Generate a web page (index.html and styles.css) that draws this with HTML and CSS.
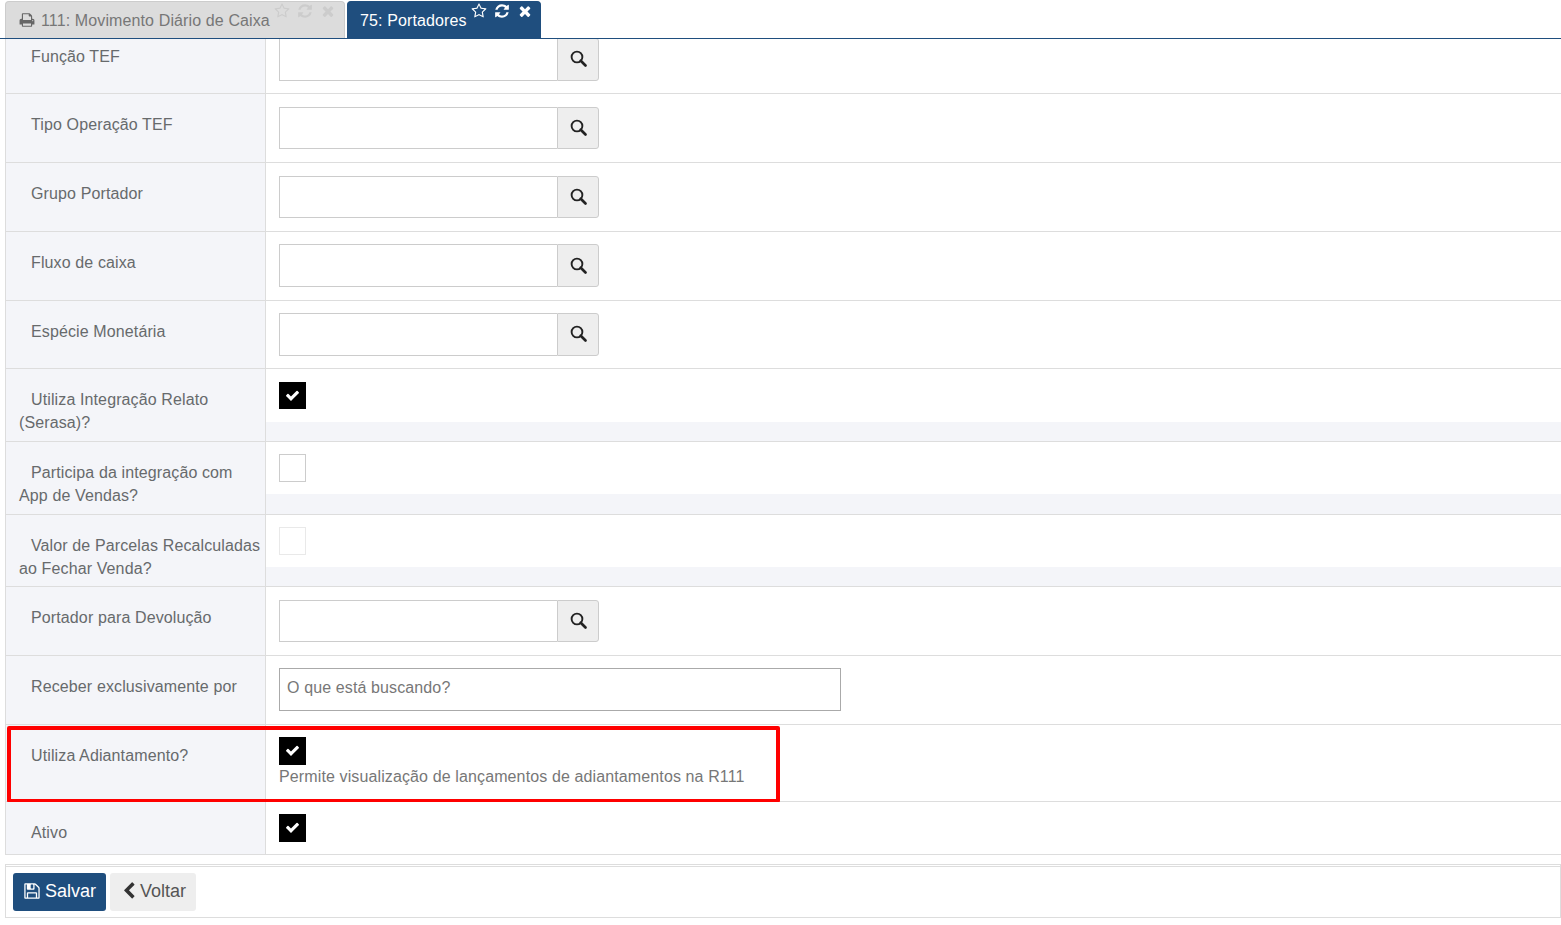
FILE: index.html
```html
<!DOCTYPE html>
<html lang="pt">
<head>
<meta charset="utf-8">
<title>Portadores</title>
<link rel="stylesheet" href="styles.css">
</head>
<body>
<svg class="defs" aria-hidden="true">
  <symbol id="i-search" viewBox="0 0 18 18"><circle cx="7.4" cy="7.4" r="5.7" fill="none" stroke="currentColor" stroke-width="2"/><path d="M11.4 11.4 16.4 16.4" fill="none" stroke="currentColor" stroke-width="2.8" stroke-linecap="round"/></symbol>
  <symbol id="i-check" viewBox="0 0 1792 1792"><path d="M1671 566q0 40-28 68l-724 724-136 136q-28 28-68 28t-68-28l-136-136-362-362q-28-28-28-68t28-68l136-136q28-28 68-28t68 28l294 295 656-657q28-28 68-28t68 28l136 136q28 28 28 68z"/></symbol>
  <symbol id="i-times" viewBox="0 0 1792 1792"><path d="M1490 1322q0 40-28 68l-136 136q-28 28-68 28t-68-28l-294-294-294 294q-28 28-68 28t-68-28l-136-136q-28-28-28-68t28-68l294-294-294-294q-28-28-28-68t28-68l136-136q28-28 68-28t68 28l294 294 294-294q28-28 68-28t68 28l136 136q28 28 28 68t-28 68l-294 294 294 294q28 28 28 68z"/></symbol>
  <symbol id="i-star" viewBox="0 0 1792 1792"><path d="M1201 1004l306-297-422-62-189-382-189 382-422 62 306 297-73 421 378-199 377 199zm527-357q0 22-26 48l-363 354 86 500q1 7 1 20 0 50-41 50-19 0-40-12l-449-236-449 236q-22 12-40 12-21 0-31.500-14.500t-10.500-35.500q0-6 2-20l86-500-364-354q-25-27-25-48 0-37 56-46l502-73 225-455q19-41 49-41t49 41l225 455 502 73q56 9 56 46z"/></symbol>
  <symbol id="i-refresh" viewBox="0 0 1792 1792"><path d="M1639 1056q0 5-1 7-64 268-268 434.500t-478 166.500q-146 0-282.500-55t-243.500-157l-129 129q-19 19-45 19t-45-19-19-45v-448q0-26 19-45t45-19h448q26 0 45 19t19 45-19 45l-137 137q71 66 161 102t187 36q134 0 250-65t186-179q11-17 53-117 8-23 30-23h192q13 0 22.500 9.500t9.500 22.500zm25-800v448q0 26-19 45t-45 19h-448q-26 0-45-19t-19-45 19-45l138-138q-148-137-349-137-134 0-250 65t-186 179q-11 17-53 117-8 23-30 23h-199q-13 0-22.500-9.500t-9.500-22.500v-7q65-268 270-434.500t480-166.500q146 0 284 55.500t245 156.500l130-129q19-19 45-19t45 19 19 45z"/></symbol>
  <symbol id="i-print" viewBox="0 0 1792 1792"><path d="M448 1536h896v-256h-896v256zm0-640h896v-384h-160q-40 0-68-28t-28-68v-160h-640v640zm1152 64q0-26-19-45t-45-19-45 19-19 45 19 45 45 19 45-19 19-45zm128 0v416q0 13-9.500 22.500t-22.500 9.500h-224v160q0 40-28 68t-68 28h-960q-40 0-68-28t-28-68v-160h-224q-13 0-22.500-9.500t-9.500-22.500v-416q0-79 56.500-135.500t135.500-56.500h64v-544q0-40 28-68t68-28h672q40 0 88 20t76 48l152 152q28 28 48 76t20 88v256h64q79 0 135.500 56.500t56.500 135.500z"/></symbol>
  <symbol id="i-save" viewBox="0 0 1792 1792"><path d="M512 1536h768v-384h-768v384zm896 0h128v-896q0-14-10-38.500t-20-34.500l-281-281q-10-10-34-20t-39-10v416q0 40-28 68t-68 28h-576q-40 0-68-28t-28-68v-416h-128v1280h128v-416q0-40 28-68t68-28h832q40 0 68 28t28 68v416zm-384-928v-320q0-13-9.500-22.500t-22.500-9.500h-192q-13 0-22.500 9.500t-9.500 22.500v320q0 13 9.500 22.500t22.500 9.500h192q13 0 22.500-9.500t9.500-22.500zm640 32v928q0 40-28 68t-68 28h-1344q-40 0-68-28t-28-68v-1344q0-40 28-68t68-28h928q40 0 88 20t76 48l280 280q28 28 48 76t20 88z"/></symbol>
  <symbol id="i-left" viewBox="0 0 1792 1792"><path d="M1427 301l-531 531 531 531q19 19 19 45t-19 45l-166 166q-19 19-45 19t-45-19l-742-742q-19-19-19-45t19-45l742-742q19-19 45-19t45 19l166 166q19 19 19 45t-19 45z"/></symbol>
</svg>

<nav class="tabs">
  <div class="tab tab-idle">
    <svg class="tab-print"><use href="#i-print"/></svg>
    <span class="tab-label">111: Movimento Diário de Caixa</span>
    <span class="tab-tools">
      <svg class="tool"><use href="#i-star"/></svg>
      <svg class="tool"><use href="#i-refresh"/></svg>
      <svg class="tool"><use href="#i-times"/></svg>
    </span>
  </div>
  <div class="tab tab-active">
    <span class="tab-label">75: Portadores</span>
    <span class="tab-tools">
      <svg class="tool"><use href="#i-star"/></svg>
      <svg class="tool"><use href="#i-refresh"/></svg>
      <svg class="tool"><use href="#i-times"/></svg>
    </span>
  </div>
</nav>

<main class="form-view">
  <div class="form">
    <div class="row row-first">
      <div class="label">Função TEF</div>
      <div class="cell"><div class="lookup"><input class="lookup-input" type="text"><button class="lookup-btn"><svg class="search-icon"><use href="#i-search"/></svg></button></div></div>
    </div>
    <div class="row">
      <div class="label">Tipo Operação TEF</div>
      <div class="cell"><div class="lookup"><input class="lookup-input" type="text"><button class="lookup-btn"><svg class="search-icon"><use href="#i-search"/></svg></button></div></div>
    </div>
    <div class="row">
      <div class="label">Grupo Portador</div>
      <div class="cell"><div class="lookup"><input class="lookup-input" type="text"><button class="lookup-btn"><svg class="search-icon"><use href="#i-search"/></svg></button></div></div>
    </div>
    <div class="row">
      <div class="label">Fluxo de caixa</div>
      <div class="cell"><div class="lookup"><input class="lookup-input" type="text"><button class="lookup-btn"><svg class="search-icon"><use href="#i-search"/></svg></button></div></div>
    </div>
    <div class="row">
      <div class="label">Espécie Monetária</div>
      <div class="cell"><div class="lookup"><input class="lookup-input" type="text"><button class="lookup-btn"><svg class="search-icon"><use href="#i-search"/></svg></button></div></div>
    </div>
    <div class="row row-two">
      <div class="label">Utiliza Integração Relato (Serasa)?</div>
      <div class="cell cell-short"><span class="check check-on"><svg class="check-icon"><use href="#i-check"/></svg></span></div>
    </div>
    <div class="row row-two">
      <div class="label">Participa da integração com App de Vendas?</div>
      <div class="cell cell-short"><span class="check"></span></div>
    </div>
    <div class="row row-two-b">
      <div class="label">Valor de Parcelas Recalculadas ao Fechar Venda?</div>
      <div class="cell cell-short"><span class="check check-off"></span></div>
    </div>
    <div class="row">
      <div class="label">Portador para Devolução</div>
      <div class="cell"><div class="lookup"><input class="lookup-input" type="text"><button class="lookup-btn"><svg class="search-icon"><use href="#i-search"/></svg></button></div></div>
    </div>
    <div class="row">
      <div class="label">Receber exclusivamente por</div>
      <div class="cell"><div class="select-box">O que está buscando?</div></div>
    </div>
    <div class="row row-hint">
      <div class="label">Utiliza Adiantamento?</div>
      <div class="cell">
        <span class="check check-on"><svg class="check-icon"><use href="#i-check"/></svg></span>
        <div class="hint">Permite visualização de lançamentos de adiantamentos na R111</div>
      </div>
      <div class="highlight"></div>
    </div>
    <div class="row row-last">
      <div class="label">Ativo</div>
      <div class="cell"><span class="check check-on"><svg class="check-icon"><use href="#i-check"/></svg></span></div>
    </div>
  </div>
</main>

<footer class="actions">
  <button class="btn btn-primary"><svg class="btn-icon"><use href="#i-save"/></svg>Salvar</button>
  <button class="btn btn-default"><svg class="btn-icon btn-chevron"><use href="#i-left"/></svg>Voltar</button>
</footer>
</body>
</html>
```
FILE: styles.css
```css
* { box-sizing: border-box; }
html, body { margin: 0; height: 100%; overflow: hidden; }
body {
  padding: 0 0 0 5px;
  background: #fff;
  color: #676a6c;
  font: 16px/23px "Liberation Sans", Arial, sans-serif;
  letter-spacing: .12px;
}
.defs { display: none; }

.tabs {
  display: flex;
  gap: 2px;
  height: 39px;
  margin-left: -5px;
  padding: 1px 0 0 5px;
  border-bottom: 1px solid #1f4e7e;
}
.tab {
  display: flex;
  height: 37px;
  border: 1px solid #ccc;
  border-bottom: 0;
  border-radius: 4px 4px 0 0;
}
.tab-idle {
  width: 340px;
  padding-left: 13px;
  background: #dcdcdc;
  color: #777;
  fill: #666;
}
.tab-active {
  width: 194px;
  padding-left: 12px;
  background: #1f4e7e;
  border-color: #1f4e7e;
  color: #fff;
  fill: #fff;
}
.tab-label { margin-top: 7px; white-space: nowrap; }
.tab-print { width: 16px; height: 16px; margin: 10px 6px 0 0; }
.tab-tools { display: flex; gap: 7px; margin: 1px 0 0 4px; height: 17px; }
.tab-idle .tab-tools { fill: #ccc; }
.tool { width: 16px; height: 16px; }

.form-view { height: 816px; overflow: hidden; }
.form { margin-top: -13.6px; border-left: 1px solid #ddd; }
.row {
  position: relative;
  display: flex;
  height: 68.8px;
  background: #f4f5f9;
  border-bottom: 1px solid #ddd;
}
.row-two { height: 72.8px; }
.row-two-b { height: 72px; }
.row-hint { height: 77px; }
.row-last { height: 53px; }
.label {
  flex: 0 0 260px;
  height: 100%;
  padding: 19px 3px 0 13px;
  text-indent: 12px;
  border-right: 1px solid #ddd;
}
.row-first .label { padding-top: 20px; }
.cell {
  flex: 1;
  padding: 12.6px 13px 0;
  background: #fff;
}
.cell-short { align-self: flex-start; height: 52.2px; padding-top: 12.2px; }

.lookup { display: flex; width: 320px; height: 42.6px; }
.lookup-input {
  width: 278px;
  height: 100%;
  border: 1px solid #ccc;
  border-right: 0;
  background: #fff;
  outline: 0;
}
.lookup-btn {
  display: flex;
  align-items: center;
  justify-content: center;
  width: 42px;
  height: 100%;
  padding: 0 0 1px;
  border: 1px solid #ccc;
  border-radius: 0 3px 3px 0;
  background: #eee;
  color: #222;
}
.search-icon { width: 17px; height: 17px; }

.check {
  display: block;
  width: 27px;
  height: 27.5px;
  border: 1px solid #ccc;
  background: #fff;
}
.check-on {
  display: flex;
  align-items: center;
  justify-content: center;
  border-color: #000;
  background: #000;
}
.check-off { border-color: #e9e9e9; }
.check-icon { width: 15px; height: 15px; fill: #fff; }

.select-box {
  width: 562px;
  height: 43px;
  padding: 7px 7px;
  border: 1px solid #aaa;
  color: #777;
}
.hint { color: #777; }

.highlight {
  position: absolute;
  top: 1px;
  left: 1px;
  width: 773px;
  height: 77px;
  border: 4px solid #f00;
  border-radius: 2px;
  pointer-events: none;
}

.actions {
  display: flex;
  gap: 4px;
  height: 54px;
  margin-top: 9px;
  padding: 6px 7px;
  border: 1px solid #ddd;
  border-top: 3px double #ddd;
  background: #fff;
}
.btn {
  display: flex;
  align-items: center;
  height: 38px;
  padding: 0 10px 2px;
  border: 0;
  border-radius: 3px;
  font: 18px "Liberation Sans", Arial, sans-serif;
}
.btn-primary { width: 93px; background: #1f4e7e; color: #fff; fill: #fff; }
.btn-default { width: 86px; background: #eee; color: #555; fill: #333; }
.btn-icon { width: 18px; height: 18px; margin-right: 4px; }
.btn-chevron { width: 20px; height: 20px; margin-right: 2px; }
```
